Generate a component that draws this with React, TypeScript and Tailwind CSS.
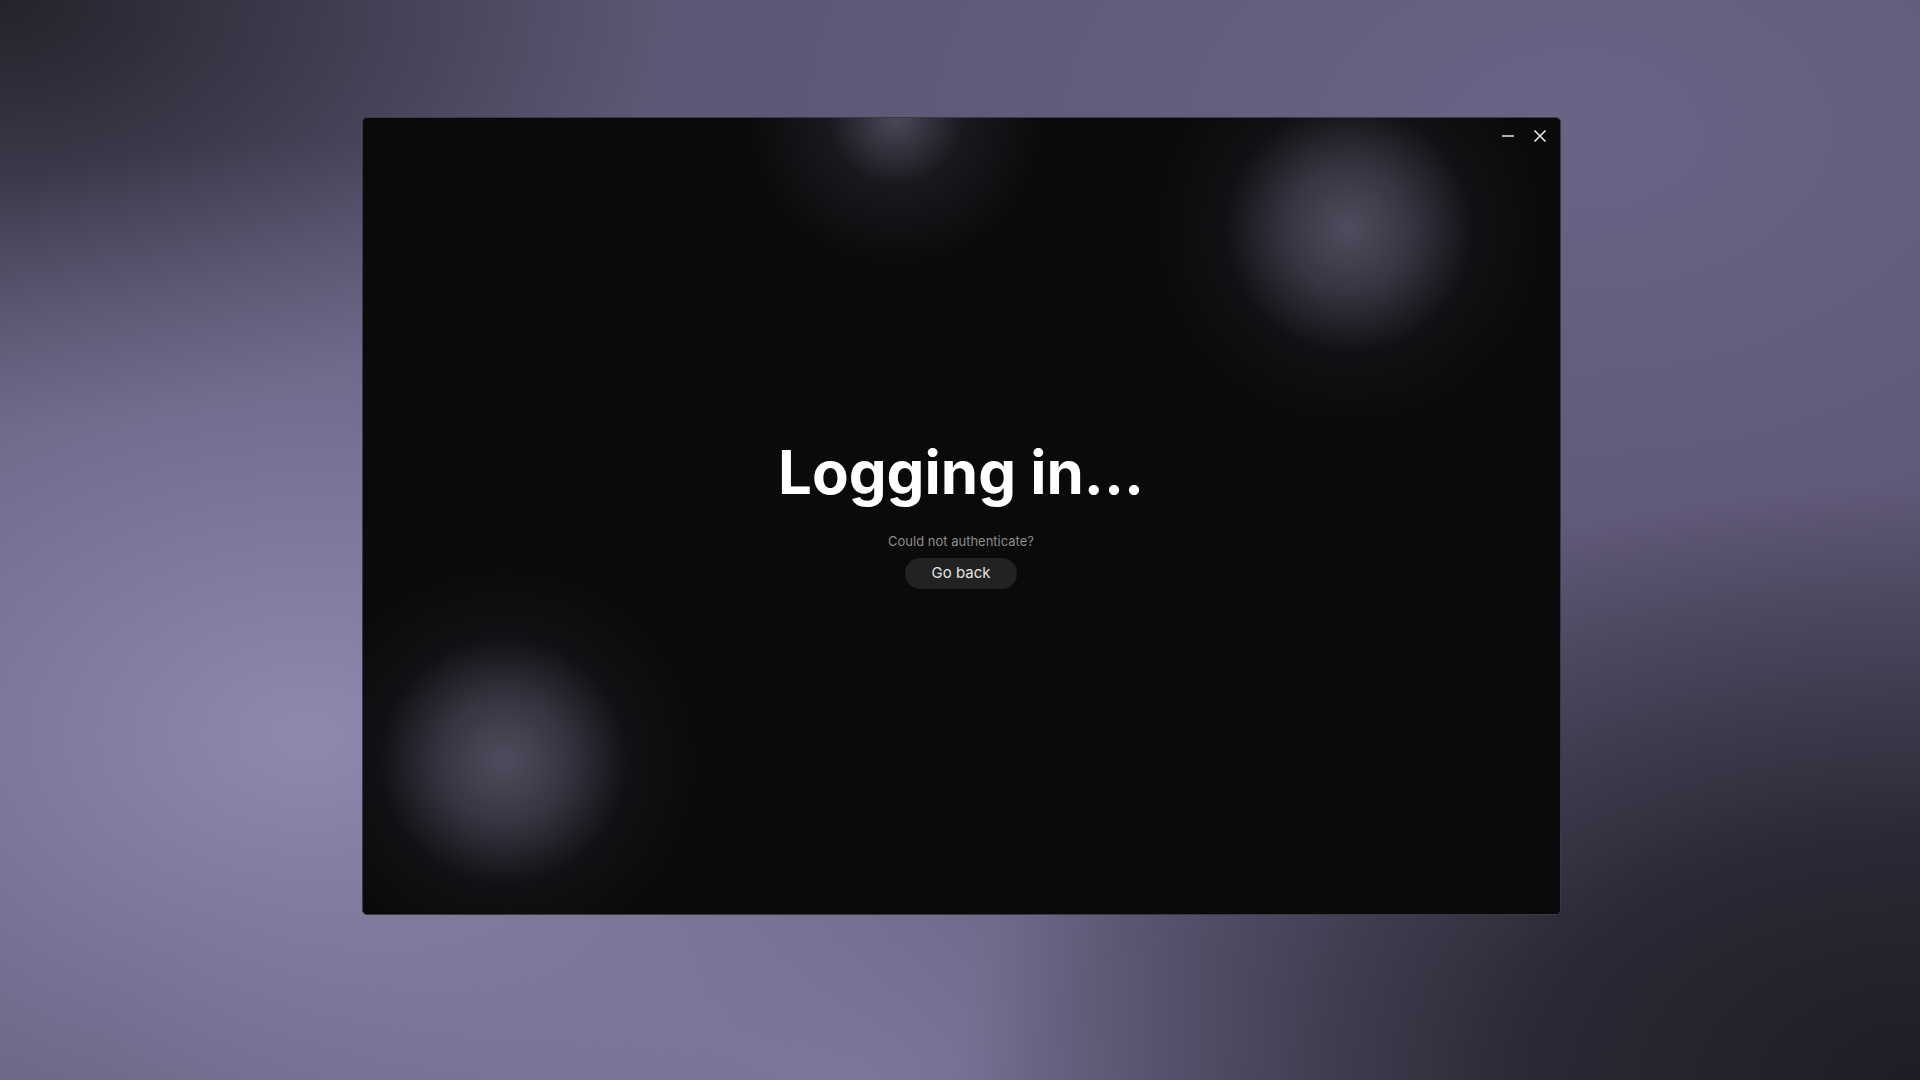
import React from 'react'

function TitleBar() {
    return (
        <div className="absolute top-0 right-0 flex items-center gap-[14px] pt-[9px] pr-[11px] z-10">
            <button className="w-[18px] h-[18px] flex items-center justify-center text-[#e6e6e6]">
                <svg width="14" height="14" viewBox="0 0 14 14" fill="none">
                    <path d="M1 7h12" stroke="currentColor" strokeWidth="1.6" />
                </svg>
            </button>
            <button className="w-[18px] h-[18px] flex items-center justify-center text-[#e6e6e6]">
                <svg width="14" height="14" viewBox="0 0 14 14" fill="none">
                    <path d="M1.5 1.5l11 11M12.5 1.5l-11 11" stroke="currentColor" strokeWidth="1.6" />
                </svg>
            </button>
        </div>
    )
}

function Glows() {
    return (
        <>
            <div className="absolute left-[383px] top-[-150px] w-[300px] h-[300px] rounded-full bg-[radial-gradient(closest-side,rgba(80,76,94,0.95),rgba(40,38,48,0.5)_45%,rgba(10,10,11,0)_100%)]" />
            <div className="absolute left-[786px] top-[-89px] w-[400px] h-[400px] rounded-full bg-[radial-gradient(closest-side,rgba(80,76,94,1),rgba(64,61,76,0.85)_30%,rgba(28,27,34,0.4)_62%,rgba(10,10,11,0)_100%)]" />
            <div className="absolute left-[-59px] top-[443px] w-[400px] h-[400px] rounded-full bg-[radial-gradient(closest-side,rgba(80,76,94,1),rgba(64,61,76,0.85)_30%,rgba(28,27,34,0.4)_62%,rgba(10,10,11,0)_100%)]" />
        </>
    )
}

export default function App() {
    return (
        <div className="w-[1920px] h-[1080px] overflow-hidden flex flex-col bg-[#5e5775] bg-[radial-gradient(ellipse_45%_55%_at_16%_68%,#8f89b0_0%,rgba(143,137,176,0)_100%),radial-gradient(ellipse_35%_40%_at_0%_0%,#24222b_0%,rgba(36,34,43,0)_100%),radial-gradient(ellipse_50%_55%_at_100%_100%,#1e1d25_0%,#2a2834_40%,rgba(42,40,52,0)_100%),radial-gradient(ellipse_40%_45%_at_82%_12%,#6b6386_0%,rgba(107,99,134,0)_100%),radial-gradient(ellipse_40%_30%_at_45%_100%,#7a7397_0%,rgba(122,115,151,0)_100%)]" style={{ fontFamily: 'Inter, "Noto Sans", sans-serif' }}>
            <div className="flex-1 flex items-center justify-center pl-[2px]">
                <div className="relative w-[1199px] h-[798px] rounded-[5px] border border-[#3a3944] bg-[#0a0a0b] overflow-hidden">
                    <Glows />
                    <TitleBar />
                    <div className="relative h-full flex flex-col items-center justify-center pb-[8px]">
                        <h1 className="text-[60px] leading-[72px] font-bold text-white">Logging in...</h1>
                        <p className="mt-[24px] text-[13px] leading-[18px] text-[#8c8c8c]">Could not authenticate?</p>
                        <button className="mt-[8px] w-[112px] h-[31px] rounded-full bg-[#222223] text-[15px] text-[#e2e2e2]">Go back</button>
                    </div>
                </div>
            </div>
            <div className="h-[48px]" />
        </div>
    )
}
